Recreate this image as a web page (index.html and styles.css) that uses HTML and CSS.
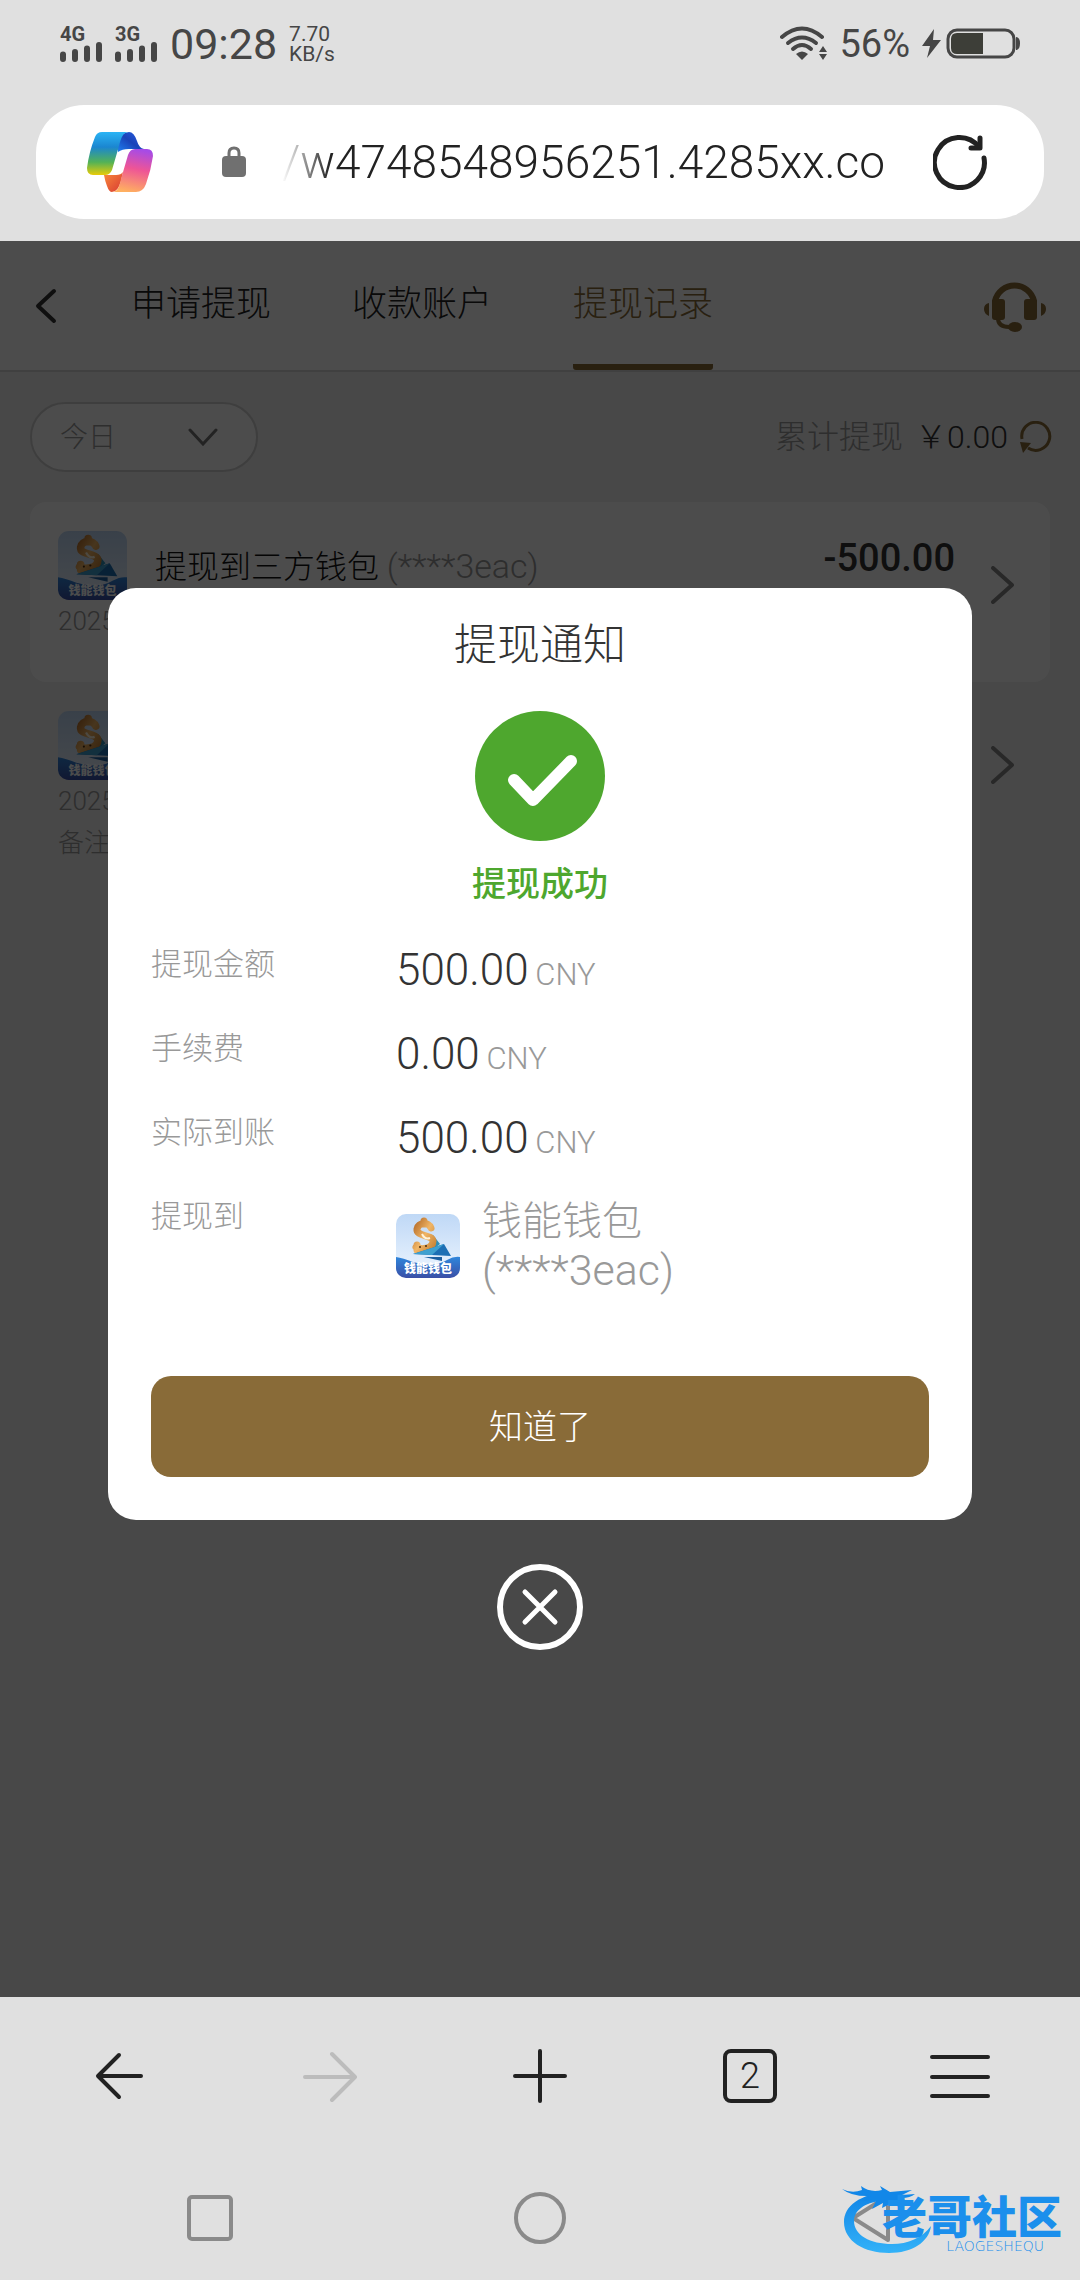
FILE: index.html
```html
<!DOCTYPE html>
<html lang="zh-CN">
<head>
	<meta charset="UTF-8">
	<meta name="viewport" content="width=device-width, initial-scale=1">
	<title>提现记录</title>
	<link rel="stylesheet" href="styles.css">
</head>
<body>
<!-- 图标 -->
<svg class="defs" width="0" height="0" aria-hidden="true">
	<defs>
		<linearGradient id="sky" x1="0" y1="0" x2="0" y2="1">
			<stop offset="0" stop-color="#bfd8f6"/>
			<stop offset="1" stop-color="#eef6ff"/>
		</linearGradient>
		<linearGradient id="wave" x1="0" y1="0" x2="0" y2="1">
			<stop offset="0" stop-color="#2f86dc"/>
			<stop offset="1" stop-color="#3a4fa6"/>
		</linearGradient>
		<linearGradient id="gold" x1="0" y1="0" x2="1" y2="1">
			<stop offset="0" stop-color="#b8702c"/>
			<stop offset="0.5" stop-color="#f0b566"/>
			<stop offset="1" stop-color="#c98538"/>
		</linearGradient>
		<clipPath id="tile"><rect width="64" height="64" rx="10"/></clipPath>
	</defs>
	<symbol id="wallet" viewBox="0 0 64 64">
		<g clip-path="url(#tile)">
			<rect width="64" height="64" fill="url(#sky)"/>
			<path d="M37 21l7 9-9 7z" fill="#2b8fb8"/>
			<path d="M28 7V10M35 14C33 8 22 8 21 15C20 23 36 20 37 27C37 35 25 36 20 33M21 36V31" fill="none" stroke="url(#gold)" stroke-width="7" stroke-linecap="round"/>
			<path d="M26 20Q29 26 34 24" fill="none" stroke="#fff4dc" stroke-width="2"/>
			<circle cx="24" cy="33" r="1" fill="#4a2c10"/>
			<circle cx="30" cy="32" r="1" fill="#4a2c10"/>
			<path d="M17 40L48 30L55 42z" fill="#1d6fb4"/>
			<path d="M17 40L48 30L36 41z" fill="#3fa0cf"/>
			<path d="M28 43H46V47z" fill="#1c5fa0"/>
			<path d="M0 43Q7 44 17 48Q38 54 51 46Q58 42 64 43V64H0z" fill="url(#wave)"/>
		</g>
	</symbol>
	<symbol id="arrow" viewBox="0 0 24 38">
		<path d="M2 2L21 19L2 36" fill="none" stroke="currentColor" stroke-width="4" stroke-linecap="round" stroke-linejoin="round"/>
	</symbol>
	<symbol id="bars" viewBox="0 0 43 20">
		<path d="M3 12.500V17M15 10V17M27 6.500V17M39 3V17" stroke="currentColor" stroke-width="6" stroke-linecap="round"/>
	</symbol>
</svg>

<header class="browser-top">
	<!-- 状态栏 -->
	<div class="status">
		<div class="signal"><b>4G</b><svg width="43" height="20"><use href="#bars"/></svg></div>
		<div class="signal"><b>3G</b><svg width="43" height="20"><use href="#bars"/></svg></div>
		<span class="time">09:28</span>
		<div class="speed"><span>7.70</span><span>KB/s</span></div>
		<div class="status-right">
			<svg width="47" height="36" viewBox="0 0 47 36">
				<g fill="none" stroke="#464646" stroke-width="4" stroke-linecap="round">
					<path d="M2 11Q22 -6 42 11"/>
					<path d="M8 17Q22 6 36 17"/>
					<path d="M13 23Q22 15 31 23"/>
				</g>
				<path d="M16 28Q22 23 28 28L22 34z" fill="#464646"/>
				<path d="M39 26l4-6 4 6zM39 28h8l-4 6z" fill="#464646"/>
			</svg>
			<span class="percent">56%</span>
			<svg width="98" height="32" viewBox="0 0 98 32">
				<path d="M12 1L0 18H8L5 30L19 12H11z" fill="#464646"/>
				<rect x="26" y="2" width="66" height="27" rx="9" fill="none" stroke="#464646" stroke-width="3"/>
				<path d="M35 5H61V26H35Q29 26 29 20V11Q29 5 35 5z" fill="#3d3e38"/>
				<path d="M94 9Q98 9 98 15.500Q98 22 94 22z" fill="#464646"/>
			</svg>
		</div>
	</div>
	<!-- 地址栏 -->
	<div class="address">
		<svg class="copilot" width="66" height="60" viewBox="0 0 66 60">
			<defs>
				<linearGradient id="c1" x1="0" y1="0" x2="0" y2="1">
					<stop offset="0" stop-color="#2bb4f5"/>
					<stop offset="0.35" stop-color="#1b86d0"/>
					<stop offset="0.7" stop-color="#52b257"/>
					<stop offset="1" stop-color="#e8cb08"/>
				</linearGradient>
				<linearGradient id="c2" x1="1" y1="0" x2="0" y2="1">
					<stop offset="0" stop-color="#2a62e8"/>
					<stop offset="0.5" stop-color="#1a43b8"/>
					<stop offset="1" stop-color="#1f7ff0"/>
				</linearGradient>
				<linearGradient id="c3" x1="0.600" y1="0" x2="0.400" y2="1">
					<stop offset="0" stop-color="#a64be6"/>
					<stop offset="0.45" stop-color="#ee5596"/>
					<stop offset="1" stop-color="#ffb060"/>
				</linearGradient>
				<linearGradient id="c4" x1="0" y1="0" x2="1" y2="1">
					<stop offset="0" stop-color="#f98a3c"/>
					<stop offset="1" stop-color="#d83a32"/>
				</linearGradient>
			</defs>
			<path d="M42 0Q47 0 50 9Q52 16 57 17H42Q35 17 31 20V10Q34 0 42 0z" fill="url(#c2)"/>
			<path d="M17 43Q18 49 20 54Q22 60 25 60Q31 60 34 49L36 40Q34 43 29 43z" fill="url(#c4)"/>
			<path d="M15 0H42C36 0 34 6 32 14L25 38Q23 43 18 43H6Q0 43 0 36Q2 20 8 5Q10 0 15 0z" fill="url(#c1)"/>
			<path d="M48 17H60Q66 17 66 24Q64 38 59 52Q56 60 49 60H25C30 60 32 56 34 47L41 23Q43 17 48 17z" fill="url(#c3)"/>
		</svg>
		<svg class="lock" width="24" height="32" viewBox="0 0 24 32">
			<rect y="10" width="24" height="21" rx="4" fill="#707070"/>
			<path d="M7 11V7Q7 2 12 2Q17 2 17 7V11" fill="none" stroke="#707070" stroke-width="3"/>
		</svg>
		<input class="url" type="text" aria-label="网址" value="/w4748548956251.4285xx.co">
		<button class="icon-btn" aria-label="刷新">
			<svg width="54" height="56" viewBox="0 0 54 56">
				<g fill="none" stroke="#222" stroke-width="5" stroke-linecap="round" stroke-linejoin="round">
					<path d="M51 24A25 25 0 1 1 46 13"/>
					<path d="M47 4V14H38"/>
				</g>
			</svg>
		</button>
	</div>
</header>

<main class="page">
	<nav class="tabs">
		<button class="icon-btn back" aria-label="返回">
			<svg width="22" height="36" viewBox="0 0 22 36"><path d="M19 3L3 18L19 33" fill="none" stroke="#333" stroke-width="4" stroke-linecap="round" stroke-linejoin="round"/></svg>
		</button>
		<a class="tab" href="#">申请提现</a>
		<a class="tab" href="#">收款账户</a>
		<a class="tab active" href="#">提现记录</a>
		<button class="icon-btn service" aria-label="客服">
			<svg width="62" height="56" viewBox="0 0 62 56" fill="#896b38">
				<path d="M11 25V23A20 20 0 0 1 50 23V25" fill="none" stroke="#896b38" stroke-width="6"/>
				<rect x="8" y="21" width="13" height="21" rx="3"/>
				<rect x="40" y="21" width="13" height="21" rx="3"/>
				<path d="M5 25V38Q0 36 0 31Q0 26 5 25zM57 25V38Q62 36 62 31Q62 26 57 25z"/>
				<path d="M14 40Q14 49 25 49" fill="none" stroke="#896b38" stroke-width="4"/>
				<ellipse cx="31" cy="49" rx="7" ry="5"/>
			</svg>
		</button>
	</nav>

	<div class="filter">
		<div class="day">
			<select aria-label="日期"><option>今日</option></select>
			<svg width="30" height="18" viewBox="0 0 30 18"><path d="M2 2L15 16L28 2" fill="none" stroke="#777" stroke-width="3" stroke-linecap="round"/></svg>
		</div>
		<div class="total">
			<span class="total-label">累计提现</span>
			<span>￥0.00</span>
			<button class="icon-btn" aria-label="刷新金额">
				<svg width="32" height="32" viewBox="0 0 32 32"><path d="M2 18A14 14 0 1 1 8 27" fill="none" stroke="#896b38" stroke-width="3"/><path d="M0 21L11 22L3 32z" fill="#896b38"/></svg>
			</button>
		</div>
	</div>

	<div class="list">
		<div class="record card">
			<div class="info">
				<div class="name">
					<div class="wallet"><svg width="69" height="69"><use href="#wallet"/></svg><span>钱能钱包</span></div>
					<span class="name-text">提现到三方钱包 <i>(****3eac)</i></span>
				</div>
				<p>2025</p>
			</div>
			<strong class="money">-500.00</strong>
			<svg class="more" width="24" height="38"><use href="#arrow"/></svg>
		</div>
		<div class="record">
			<div class="info">
				<div class="name">
					<div class="wallet"><svg width="69" height="69"><use href="#wallet"/></svg><span>钱能钱包</span></div>
				</div>
				<p>2025</p>
				<p>备注</p>
			</div>
			<svg class="more" width="24" height="38"><use href="#arrow"/></svg>
		</div>
	</div>

	<!-- 提现通知弹窗 -->
	<div class="mask">
		<section class="dialog" role="dialog" aria-labelledby="dialogTitle">
			<h2 id="dialogTitle">提现通知</h2>
			<svg class="ok" width="130" height="130" viewBox="0 0 130 130">
				<circle cx="65" cy="65" r="65" fill="#4ea72e"/>
				<path d="M39 69L58 89L96 50" fill="none" stroke="#fff" stroke-width="12" stroke-linecap="round" stroke-linejoin="round"/>
			</svg>
			<p class="result">提现成功</p>
			<dl class="detail">
				<dt>提现金额</dt>
				<dd>500.00 <small>CNY</small></dd>
				<dt>手续费</dt>
				<dd>0.00 <small>CNY</small></dd>
				<dt>实际到账</dt>
				<dd>500.00 <small>CNY</small></dd>
				<dt>提现到</dt>
				<dd class="target">
					<div class="wallet"><svg width="64" height="64"><use href="#wallet"/></svg><span>钱能钱包</span></div>
					<div class="target-text"><p>钱能钱包</p><p class="account">(****3eac)</p></div>
				</dd>
			</dl>
			<button class="confirm">知道了</button>
		</section>
		<button class="icon-btn close" aria-label="关闭">
			<svg width="86" height="86" viewBox="0 0 86 86" fill="none" stroke="#fff" stroke-linecap="round">
				<circle cx="43" cy="43" r="40" stroke-width="6"/>
				<path d="M28 28L58 58M58 28L28 58" stroke-width="5"/>
			</svg>
		</button>
	</div>
</main>

<footer>
	<!-- 浏览器工具栏 -->
	<div class="toolbar">
		<button class="icon-btn" aria-label="后退"><svg width="54" height="54" viewBox="0 0 54 54"><path d="M48 27H6M26 6L5 27L26 48" fill="none" stroke="#222" stroke-width="4" stroke-linecap="round" stroke-linejoin="round"/></svg></button>
		<button class="icon-btn" aria-label="前进"><svg width="54" height="54" viewBox="0 0 54 54"><path d="M2 28H51M29 5L52 28L29 51" fill="none" stroke="#bcbcbc" stroke-width="4" stroke-linecap="round" stroke-linejoin="round"/></svg></button>
		<button class="icon-btn" aria-label="新建"><svg width="54" height="54" viewBox="0 0 54 54"><path d="M2 27H52M27 2V52" stroke="#222" stroke-width="4" stroke-linecap="round"/></svg></button>
		<button class="icon-btn pages" aria-label="标签页">2</button>
		<button class="icon-btn" aria-label="菜单"><svg width="60" height="54" viewBox="0 0 60 54"><path d="M2 8H58M2 28H58M2 47H58" stroke="#222" stroke-width="4" stroke-linecap="round"/></svg></button>
	</div>
	<!-- 系统导航 -->
	<div class="sysnav">
		<button class="icon-btn" aria-label="最近任务"><svg width="46" height="46" viewBox="0 0 46 46"><rect x="2" y="2" width="42" height="42" rx="3" fill="none" stroke="#8a8a8a" stroke-width="4"/></svg></button>
		<button class="icon-btn" aria-label="主页"><svg width="52" height="52" viewBox="0 0 52 52"><circle cx="26" cy="26" r="24" fill="none" stroke="#8a8a8a" stroke-width="4"/></svg></button>
		<button class="icon-btn" aria-label="返回键"><svg width="46" height="52" viewBox="0 0 46 52"><path d="M41 4V48L6 26z" fill="none" stroke="#8a8a8a" stroke-width="4" stroke-linejoin="round"/></svg></button>
		<div class="brand">
			<svg width="92" height="72" viewBox="0 0 92 72">
				<defs>
					<linearGradient id="blue" x1="0" y1="0" x2="0" y2="1">
						<stop offset="0" stop-color="#0f83e6"/>
						<stop offset="1" stop-color="#33b2f8"/>
					</linearGradient>
				</defs>
				<path d="M46 8C18 10 2 22 2 38C2 57 22 69 47 69C70 69 87 58 89 42C80 54 66 60 50 60C28 60 12 51 12 37C12 25 26 17 42 17z" fill="url(#blue)"/>
				<path d="M0 5Q10 10 20 6L19 2Q28 9 40 6L38 2L48 8L70 6L60 11L73 10Q68 14 60 14L70 21L56 18L62 24L48 20L40 24L41 19L30 25L35 15L21 17L29 12Q10 13 0 5z" fill="#1287e8"/>
			</svg>
			<div class="brand-text"><b>老哥社区</b><span>LAOGESHEQU</span></div>
		</div>
	</div>
</footer>
</body>
</html>
```
FILE: styles.css
```css
* {
    margin: 0;
    padding: 0;
    box-sizing: border-box;
}

body {
    min-height: 100vh;
    display: flex;
    flex-direction: column;
    background-color: #e0e0e0;
    color: #333;
    font-family: Roboto, "Noto Sans CJK SC", sans-serif;
    font-weight: 300;
}

svg {
    display: block;
    flex-shrink: 0;
}

.defs {
    position: absolute;
}

button, select, input {
    font: inherit;
    color: inherit;
    border: none;
    background: none;
}

.icon-btn {
    display: flex;
    align-items: center;
    justify-content: center;
    cursor: pointer;
}

/*钱包图标，文字压在图上*/
.wallet {
    position: relative;
    flex-shrink: 0;
}

.wallet span {
    position: absolute;
    left: 0;
    right: 0;
    bottom: 2px;
    color: #fff;
    font-size: 12px;
    font-weight: 900;
    line-height: 14px;
    text-align: center;
    white-space: nowrap;
}

/*状态栏*/
.status {
    height: 87px;
    padding: 0 60px;
    display: flex;
    align-items: center;
    color: #464646;
    font-weight: 400;
}

.signal {
    margin-right: 12px;
}

.signal b {
    display: block;
    font-size: 20px;
    line-height: 16px;
}

.time {
    font-size: 43px;
}

.speed {
    margin-left: 12px;
    font-size: 21px;
    line-height: 20px;
}

.speed span {
    display: block;
}

.status-right {
    margin-left: auto;
    display: flex;
    align-items: center;
    gap: 12px;
}

.percent {
    font-size: 38px;
}

/*地址栏*/
.address {
    height: 114px;
    margin: 18px 36px 22px;
    padding: 0 57px 0 51px;
    border-radius: 48px;
    background-color: #fff;
    display: flex;
    align-items: center;
}

.lock {
    margin: 0 36px 0 69px;
}

.url {
    flex: 1;
    min-width: 0;
    color: #222;
    font-size: 46px;
    outline: none;
    -webkit-mask-image: linear-gradient(to right, transparent, #000 48px);
    mask-image: linear-gradient(to right, transparent, #000 48px);
}

/*页面内容*/
.page {
    position: relative;
    flex: 1;
    background-color: #f0f0f0;
}

.tabs {
    height: 131px;
    padding: 0 34px 0 35px;
    display: flex;
    align-items: center;
    gap: 81px;
    background-color: #fff;
    border-bottom: 2px solid #d8d8d8;
}

.back {
    margin-right: -7px;
}

.tab {
    height: 129px;
    border-bottom: 6px solid transparent;
    border-radius: 3px;
    color: #222;
    font-size: 35px;
    line-height: 128px;
    text-decoration: none;
}

.active {
    color: #896b38;
    border-color: #896b38;
}

.service {
    margin-left: auto;
}

.filter {
    padding: 30px 28px 30px 30px;
    display: flex;
    align-items: center;
    justify-content: space-between;
}

.day {
    width: 228px;
    height: 70px;
    padding: 0 38px 0 28px;
    display: flex;
    align-items: center;
    border: 2px solid #d0d0d0;
    border-radius: 35px;
    background-color: #fff;
    color: #999;
    font-size: 28px;
}

.day select {
    flex: 1;
    min-width: 0;
    appearance: none;
}

.total {
    display: flex;
    align-items: center;
    gap: 12px;
    font-size: 32px;
    line-height: 40px;
}

.total-label {
    color: #999;
}

.list {
    padding: 0 30px;
}

.record {
    min-height: 180px;
    padding: 29px 35px 0 28px;
    display: flex;
    align-items: flex-start;
    border-radius: 16px;
}

.card {
    background-color: #fff;
}

.info {
    flex: 1;
}

.name {
    display: flex;
    align-items: center;
    gap: 28px;
}

.name-text {
    padding-bottom: 4px;
    color: #111;
    font-size: 32px;
}

.name-text i {
    color: #999;
    font-size: 34px;
    font-style: normal;
}

.info p {
    color: #999;
    font-size: 26px;
    line-height: 42px;
}

.money {
    font-size: 38px;
    font-weight: 500;
    line-height: 54px;
}

.more {
    margin: 35px 0 0 36px;
    color: #888;
}

/*弹窗*/
.mask {
    position: absolute;
    inset: 0;
    display: flex;
    flex-direction: column;
    align-items: center;
    justify-content: center;
    gap: 44px;
    background-color: rgba(0, 0, 0, .7);
}

.dialog {
    width: 80%;
    padding: 27px 43px 43px;
    border-radius: 28px;
    background-color: #fff;
    text-align: center;
}

.dialog h2 {
    font-size: 43px;
    font-weight: 300;
    line-height: 60px;
}

.ok {
    margin: 36px auto 19px;
}

.result {
    color: #4ea72e;
    font-size: 34px;
    font-weight: 500;
    line-height: 48px;
}

.detail {
    margin: 38px 0 82px;
    display: grid;
    grid-template-columns: 245px 1fr;
    row-gap: 36px;
    text-align: left;
}

.detail dt {
    color: #999;
    font-size: 31px;
    line-height: 38px;
}

.detail dd {
    font-size: 44px;
    line-height: 48px;
}

.detail small {
    margin-left: -4px;
    color: #999;
    font-size: 31px;
    line-height: 1;
}

.detail .target {
    display: flex;
    align-items: center;
    gap: 22px;
    color: #999;
}

.target-text {
    font-size: 40px;
}

.account {
    font-size: 43px;
}

.confirm {
    width: 100%;
    height: 101px;
    padding-bottom: 4px;
    border-radius: 20px;
    background-color: #896b38;
    color: #fff;
    font-size: 34px;
}

/*底部*/
.toolbar {
    height: 158px;
    padding: 0 15px;
    display: grid;
    grid-template-columns: repeat(5, 1fr);
    justify-items: center;
    align-items: center;
}

.pages {
    width: 54px;
    height: 54px;
    border: 4px solid #222;
    border-radius: 8px;
    color: #222;
    font-size: 36px;
}

.sysnav {
    position: relative;
    height: 125px;
    padding: 0 45px;
    display: grid;
    grid-template-columns: repeat(3, 1fr);
    justify-items: center;
    align-items: center;
}

/*品牌标识浮在导航上*/
.brand {
    position: absolute;
    right: 18px;
    bottom: 24px;
    display: flex;
    align-items: flex-end;
}

.brand-text {
    margin-left: -52px;
    padding-bottom: 2px;
    color: #1b8fec;
    text-align: right;
}

.brand-text b {
    display: block;
    font-size: 45px;
    font-weight: 900;
    line-height: 38px;
}

.brand-text span {
    display: block;
    padding-right: 18px;
    font-family: "DejaVu Sans", sans-serif;
    font-size: 14px;
    line-height: 16px;
}
```
